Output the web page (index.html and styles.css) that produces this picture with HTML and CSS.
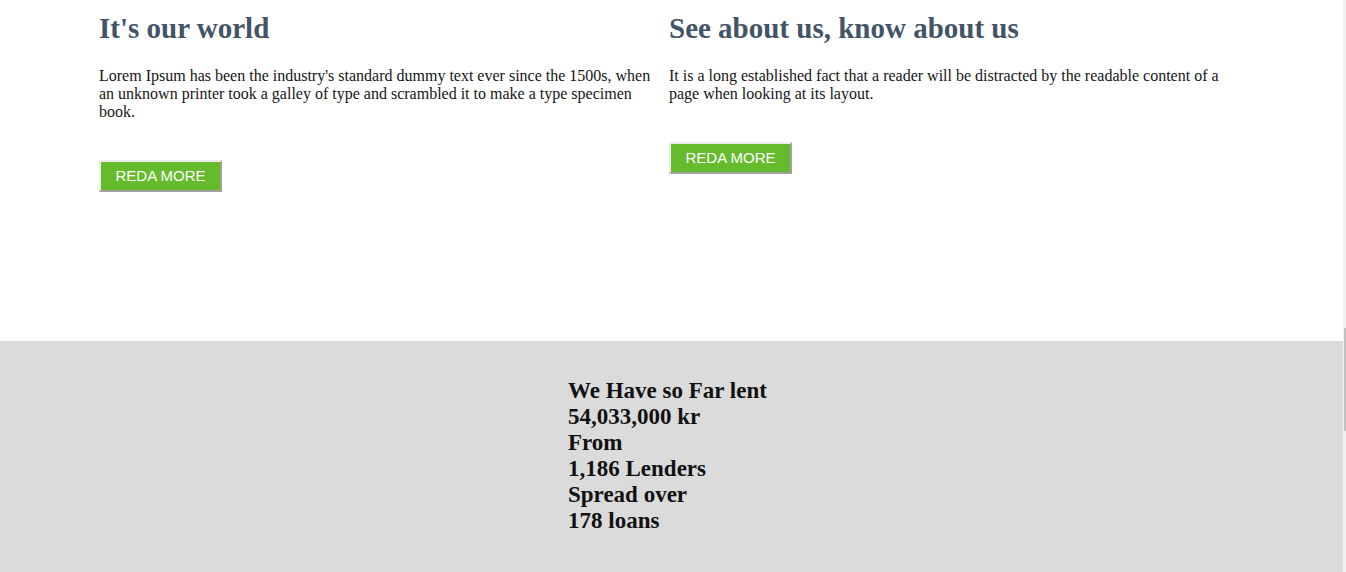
FILE: index.html
```html
<!DOCTYPE html>
<html lang="en">
<head>
<meta charset="utf-8">
<title>About</title>
<link rel="stylesheet" href="styles.css">
</head>
<body>
<div class="page">
  <section class="intro">
    <div class="intro-grid">
      <article class="col">
        <h2 class="col-title">It's our world</h2>
        <p class="col-text">Lorem Ipsum has been the industry's standard dummy text ever since the 1500s, when an unknown printer took a galley of type and scrambled it to make a type specimen book.</p>
        <button class="btn" type="button">REDA MORE</button>
      </article>
      <article class="col">
        <h2 class="col-title">See about us, know about us</h2>
        <p class="col-text">It is a long established fact that a reader will be distracted by the readable content of a page when looking at its layout.</p>
        <button class="btn" type="button">REDA MORE</button>
      </article>
    </div>
  </section>
  <section class="stats">
    <div class="stats-box">
      <div class="stat-line">We Have so Far lent</div>
      <div class="stat-line">54,033,000 kr</div>
      <div class="stat-line">From</div>
      <div class="stat-line">1,186 Lenders</div>
      <div class="stat-line">Spread over</div>
      <div class="stat-line">178 loans</div>
    </div>
  </section>
</div>
<div class="scrollbar"><div class="scrollbar-thumb"></div></div>
</body>
</html>
```

FILE: styles.css
```css
html, body {
  margin: 0;
  padding: 0;
  height: 572px;
  overflow: hidden;
  background: #ffffff;
}

body {
  font-family: "Liberation Serif", "Times New Roman", serif;
  color: #111111;
}

.page {
  width: 1343px;
}

.intro {
  height: 341px;
  box-sizing: border-box;
  padding: 12px 0 0 99px;
}

.intro-grid {
  display: grid;
  grid-template-columns: 555px 555px;
  column-gap: 15px;
  align-items: start;
}

.col-title {
  margin: 0;
  font-size: 29px;
  line-height: 33px;
  font-weight: bold;
  color: #435466;
}

.col-text {
  margin: 22px 0 39px;
  font-size: 16px;
  line-height: 18px;
  color: #151515;
}

.btn {
  display: block;
  width: 123px;
  height: 32px;
  box-sizing: border-box;
  margin: 0;
  padding: 0;
  background: #65bb2b;
  color: #ffffff;
  font-family: "Liberation Sans", Arial, sans-serif;
  font-size: 15px;
  line-height: 18px;
  text-align: center;
  border-style: solid;
  border-width: 2px;
  border-color: #ececec #a2a2a2 #a2a2a2 #ececec;
  cursor: pointer;
}

.stats {
  height: 231px;
  box-sizing: border-box;
  background: #dbdbdb;
  padding: 37px 0 0 568px;
}

.stat-line {
  font-size: 23px;
  line-height: 26px;
  font-weight: bold;
  color: #111111;
}

.scrollbar {
  position: fixed;
  top: 0;
  right: 0;
  width: 3px;
  height: 572px;
  background: #f1f1f1;
}

.scrollbar-thumb {
  position: absolute;
  top: 328px;
  right: 0;
  width: 2px;
  height: 103px;
  background: #c1c1c1;
}
```
